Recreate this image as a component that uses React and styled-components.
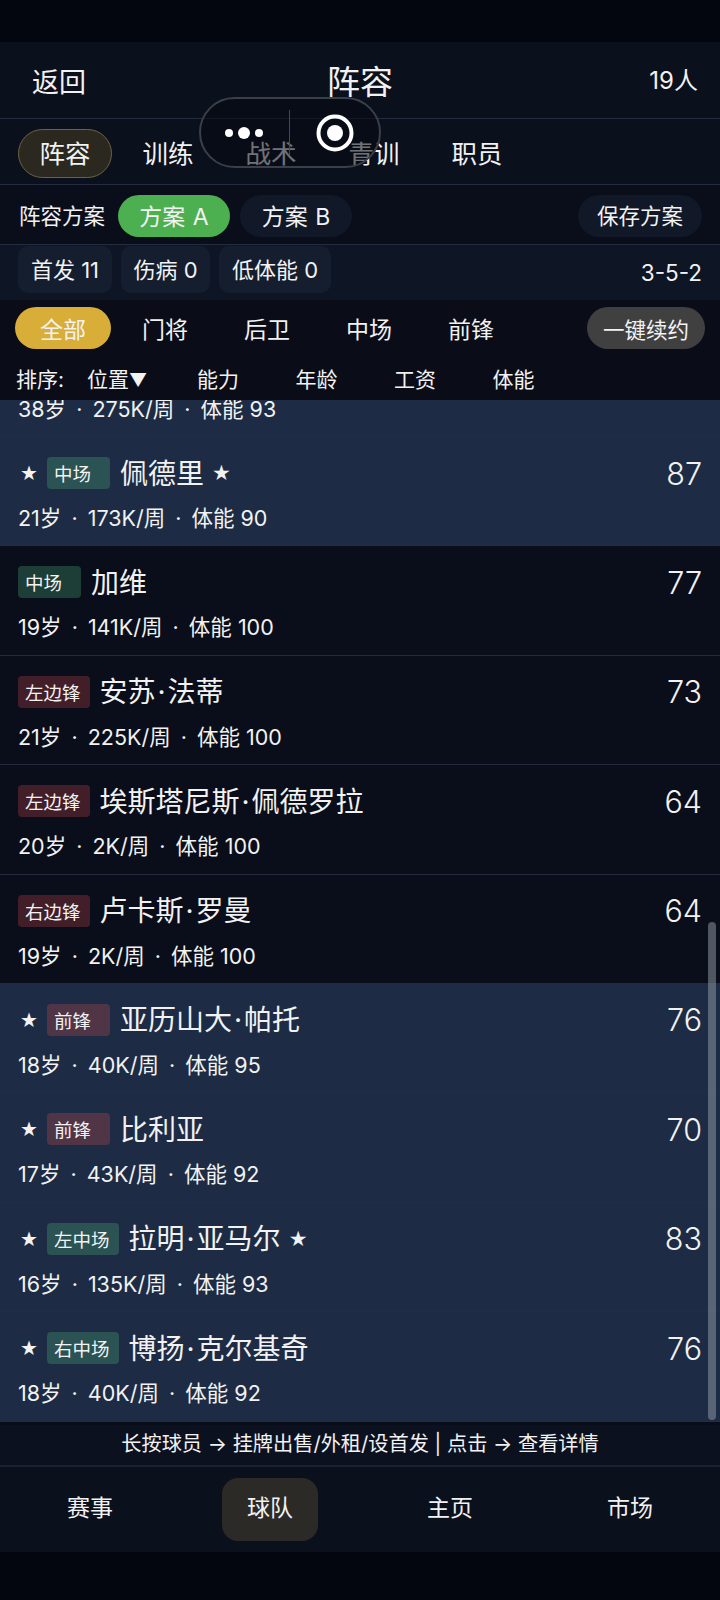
import React from "react";
import styled, { createGlobalStyle } from "styled-components";

const GlobalStyle = createGlobalStyle`
    html, body {
        margin: 0;
        padding: 0;
        background: #03060f;
    }
    body {
        font-family: Inter, "Noto Sans CJK SC", sans-serif;
        font-weight: 400;
        color: #f2f2f2;
    }
    * {
        box-sizing: border-box;
    }
`;

const Screen = styled.div`
    position: relative;
    width: 720px;
    height: 1600px;
    display: flex;
    flex-direction: column;
    overflow: hidden;
`;
const StatusBar = styled.div`
    height: 42px;
    flex-shrink: 0;
    background: #03060f;
`;
const Header = styled.div`
    height: 77px;
    flex-shrink: 0;
    display: grid;
    grid-template-columns: 1fr auto 1fr;
    align-items: center;
    padding: 0 22px;
    background: #0b101d;
    border-bottom: 1px solid #252c40;
`;
const BackLink = styled.span`
    margin-left: 10px;
    font-size: 27px;
`;
const Title = styled.span`
    font-size: 33px;
`;
const Count = styled.span`
    padding-bottom: 3px;
    font-size: 24px;
    text-align: right;
`;
const TabRow = styled.div`
    height: 66px;
    flex-shrink: 0;
    display: flex;
    align-items: center;
    column-gap: 9px;
    padding: 3px 18px 0;
    background: #0b101d;
    border-bottom: 1px solid #252c40;
`;
const Tab = styled.div`
    width: 94px;
    height: 49px;
    padding-bottom: 3px;
    display: flex;
    align-items: center;
    justify-content: center;
    font-size: 25.5px;
    border-radius: 25px;
    border: 1px solid ${(props) => (props.$active ? "#6f6242" : "transparent")};
    background: ${(props) => (props.$active ? "#2b2820" : "transparent")};
`;
const PlanRow = styled.div`
    height: 60px;
    flex-shrink: 0;
    display: flex;
    align-items: center;
    padding: 2px 18px 0 19px;
    background: #0a0e1a;
    border-bottom: 1px solid #252c40;
`;
const PlanLabel = styled.span`
    padding-bottom: 2px;
    font-size: 21.5px;
    margin-right: 13px;
`;
const PlanPill = styled.div`
    width: ${(props) => (props.$wide ? "124px" : "112px")};
    height: 42px;
    padding-bottom: 2px;
    display: flex;
    align-items: center;
    justify-content: center;
    margin-right: 10px;
    font-size: 23px;
    word-spacing: 1px;
    border-radius: 21px;
    background: ${(props) => (props.$active ? "#4caf50" : "#111827")};
    ${(props) => props.$wide && "margin: 0 0 0 auto; font-size: 21.5px;"}
`;
const StatsRow = styled.div`
    height: 55px;
    flex-shrink: 0;
    display: flex;
    align-items: flex-start;
    column-gap: 9px;
    padding: 1px 18px 0;
    background: #0e1524;
`;
const StatChip = styled.div`
    width: ${(props) => props.$width}px;
    height: 47px;
    padding-bottom: 3px;
    display: flex;
    align-items: center;
    justify-content: center;
    font-size: 22px;
    border-radius: 10px;
    background: #151e2f;
`;
const Formation = styled.span`
    margin-left: auto;
    margin-top: 13px;
    font-size: 22.5px;
`;
const FilterRow = styled.div`
    height: 49px;
    flex-shrink: 0;
    display: flex;
    align-items: flex-end;
    padding: 0 15px;
    background: #0a0d18;
`;
const FilterPill = styled.div`
    width: 96px;
    height: 42px;
    margin-right: 6px;
    display: flex;
    align-items: center;
    justify-content: center;
    font-size: 23px;
    border-radius: 21px;
    background: ${(props) => (props.$active ? "#d9ae38" : "transparent")};
`;
const RenewButton = styled.div`
    width: 118px;
    height: 42px;
    margin-left: auto;
    display: flex;
    align-items: center;
    justify-content: center;
    font-size: 21.5px;
    border-radius: 21px;
    background: #404040;
`;
const SortRow = styled.div`
    height: 51px;
    flex-shrink: 0;
    display: flex;
    align-items: center;
    padding: 6px 0 0 16px;
    background: #0a0d18;
    font-size: 21px;
`;
const SortLabel = styled.span`
    width: 71px;
`;
const SortItem = styled.span`
    width: 98.5px;
    ${(props) => props.$first && "width: 110px;"}
`;
const SortArrow = styled.span`
    font-size: 18px;
`;
const ListArea = styled.div`
    position: relative;
    height: 1025px;
    flex-shrink: 0;
    overflow: hidden;
    background: #0a0e1a;
`;
/* the list is scrolled: only the stats line of the first row still shows */
const ListInner = styled.div`
    margin-top: -72.4px;
`;
const PlayerRow = styled.div`
    height: 109.4px;
    padding: 16px 18px 0;
    background: ${(props) => (props.$starter ? "#1d2c44" : "#0a0e1a")};
    border-bottom: 1px solid ${(props) => (props.$starter ? "#1f2e47" : "#232a3d")};
`;
const TopLine = styled.div`
    height: 40px;
    display: flex;
    align-items: center;
`;
const Star = styled.span`
    width: 29px;
    padding-left: 2px;
    font-family: "DejaVu Sans", sans-serif;
    font-size: 20px;
    flex-shrink: 0;
`;
const tagColors = {
    mid: "rgba(76, 175, 120, 0.3)",
    wing: "rgba(229, 83, 83, 0.26)",
};
const PositionTag = styled.span`
    min-width: 63px;
    height: 32px;
    padding: 0 9px 0 7px;
    margin-right: 10px;
    display: flex;
    align-items: center;
    font-size: 18.5px;
    border-radius: 4px;
    background: ${(props) => tagColors[props.$kind]};
`;
const Name = styled.span`
    padding-bottom: 3px;
    font-size: 28px;
`;
const NameDot = styled.span`
    margin: 0 2px;
`;
const NameStar = styled.span`
    margin-left: 8px;
    font-family: "DejaVu Sans", sans-serif;
    font-size: 21px;
`;
const Rating = styled.span`
    margin-left: auto;
    font-size: 30.5px;
    font-weight: 350;
`;
const Meta = styled.div`
    margin-top: 8px;
    font-size: 21.5px;
    white-space: pre;
`;
const MetaDot = styled.span`
    margin: 0 4px;
`;
const ScrollThumb = styled.div`
    position: absolute;
    top: 522px;
    right: 4px;
    width: 8px;
    height: 498px;
    border-radius: 4px;
    background: rgba(150, 158, 170, 0.5);
`;
const HintBar = styled.div`
    height: 42px;
    flex-shrink: 0;
    padding-bottom: 5px;
    display: flex;
    align-items: center;
    justify-content: center;
    font-size: 20.2px;
    background: #0c1120;
    border-bottom: 2px solid #1a2133;
`;
const BottomNav = styled.div`
    height: 85px;
    flex-shrink: 0;
    display: grid;
    grid-template-columns: repeat(4, 1fr);
    align-items: center;
    justify-items: center;
    background: #0b101d;
`;
const NavItem = styled.div`
    width: 96px;
    height: 63px;
    padding-bottom: 6px;
    margin-top: -1px;
    display: flex;
    align-items: center;
    justify-content: center;
    font-size: 23px;
    border-radius: 16px;
    background: ${(props) => (props.$active ? "#2c2a26" : "transparent")};
`;
const Capsule = styled.div`
    position: absolute;
    left: 199px;
    top: 97px;
    width: 182px;
    height: 71px;
    display: flex;
    align-items: center;
    border: 2px solid #3b3f47;
    border-radius: 36px;
    background: rgba(8, 10, 18, 0.55);
`;
const CapsuleHalf = styled.div`
    flex: 1;
    display: flex;
    align-items: center;
    justify-content: center;
`;
const CapsuleDivider = styled.div`
    width: 1px;
    height: 45px;
    margin-left: -1px;
    background: #44484f;
`;

const players = [
    { starter: true, age: "38岁", wage: "275K/周", fit: "体能 93" },
    { starter: true, kind: "mid", tag: "中场", name: "佩德里", star: true, rating: 87, age: "21岁", wage: "173K/周", fit: "体能 90" },
    { kind: "mid", tag: "中场", name: "加维", rating: 77, age: "19岁", wage: "141K/周", fit: "体能 100" },
    { kind: "wing", tag: "左边锋", name: "安苏·法蒂", rating: 73, age: "21岁", wage: "225K/周", fit: "体能 100" },
    { kind: "wing", tag: "左边锋", name: "埃斯塔尼斯·佩德罗拉", rating: 64, age: "20岁", wage: "2K/周", fit: "体能 100" },
    { kind: "wing", tag: "右边锋", name: "卢卡斯·罗曼", rating: 64, age: "19岁", wage: "2K/周", fit: "体能 100" },
    { starter: true, kind: "wing", tag: "前锋", name: "亚历山大·帕托", rating: 76, age: "18岁", wage: "40K/周", fit: "体能 95" },
    { starter: true, kind: "wing", tag: "前锋", name: "比利亚", rating: 70, age: "17岁", wage: "43K/周", fit: "体能 92" },
    { starter: true, kind: "mid", tag: "左中场", name: "拉明·亚马尔", star: true, rating: 83, age: "16岁", wage: "135K/周", fit: "体能 93" },
    { starter: true, kind: "mid", tag: "右中场", name: "博扬·克尔基奇", rating: 76, age: "18岁", wage: "40K/周", fit: "体能 92" },
];

const PlayerName = ({ name }) => {
    const [first, last] = name.split("·");
    return (
        <Name>
            {first}
            {last && <NameDot>·</NameDot>}
            {last}
        </Name>
    );
};

const App = () => {
    return (
        <Screen>
            <GlobalStyle />
            <StatusBar />
            <Header>
                <BackLink>返回</BackLink>
                <Title>阵容</Title>
                <Count>19人</Count>
            </Header>
            <TabRow>
                <Tab $active>阵容</Tab>
                <Tab>训练</Tab>
                <Tab>战术</Tab>
                <Tab>青训</Tab>
                <Tab>职员</Tab>
            </TabRow>
            <PlanRow>
                <PlanLabel>阵容方案</PlanLabel>
                <PlanPill $active>方案 A</PlanPill>
                <PlanPill>方案 B</PlanPill>
                <PlanPill $wide>保存方案</PlanPill>
            </PlanRow>
            <StatsRow>
                <StatChip $width={94}>首发 11</StatChip>
                <StatChip $width={89}>伤病 0</StatChip>
                <StatChip $width={112}>低体能 0</StatChip>
                <Formation>3-5-2</Formation>
            </StatsRow>
            <FilterRow>
                <FilterPill $active>全部</FilterPill>
                <FilterPill>门将</FilterPill>
                <FilterPill>后卫</FilterPill>
                <FilterPill>中场</FilterPill>
                <FilterPill>前锋</FilterPill>
                <RenewButton>一键续约</RenewButton>
            </FilterRow>
            <SortRow>
                <SortLabel>排序:</SortLabel>
                <SortItem $first>
                    位置<SortArrow>▼</SortArrow>
                </SortItem>
                <SortItem>能力</SortItem>
                <SortItem>年龄</SortItem>
                <SortItem>工资</SortItem>
                <SortItem>体能</SortItem>
            </SortRow>
            <ListArea>
                <ListInner>
                    {players.map((player, index) => (
                        <PlayerRow key={index} $starter={player.starter}>
                            <TopLine>
                                {player.name && (
                                    <>
                                        {player.starter && <Star>★</Star>}
                                        <PositionTag $kind={player.kind}>{player.tag}</PositionTag>
                                        <PlayerName name={player.name} />
                                        {player.star && <NameStar>★</NameStar>}
                                        <Rating>{player.rating}</Rating>
                                    </>
                                )}
                            </TopLine>
                            <Meta>
                                {player.age}
                                <MetaDot> · </MetaDot>
                                {player.wage}
                                <MetaDot> · </MetaDot>
                                {player.fit}
                            </Meta>
                        </PlayerRow>
                    ))}
                </ListInner>
                <ScrollThumb />
            </ListArea>
            <HintBar>长按球员 → 挂牌出售/外租/设首发 | 点击 → 查看详情</HintBar>
            <BottomNav>
                <NavItem>赛事</NavItem>
                <NavItem $active>球队</NavItem>
                <NavItem>主页</NavItem>
                <NavItem>市场</NavItem>
            </BottomNav>
            <Capsule>
                <CapsuleHalf>
                    <svg width="44" height="16" viewBox="0 0 44 16">
                        <circle cx="5" cy="8" r="4" fill="#fff" />
                        <circle cx="20" cy="8" r="6" fill="#fff" />
                        <circle cx="35" cy="8" r="4" fill="#fff" />
                    </svg>
                </CapsuleHalf>
                <CapsuleDivider />
                <CapsuleHalf>
                    <svg width="40" height="40" viewBox="0 0 40 40">
                        <circle cx="20" cy="20" r="16.5" fill="none" stroke="#fff" strokeWidth="4" />
                        <circle cx="20" cy="20" r="8" fill="#fff" />
                    </svg>
                </CapsuleHalf>
            </Capsule>
        </Screen>
    );
};

export default App;
